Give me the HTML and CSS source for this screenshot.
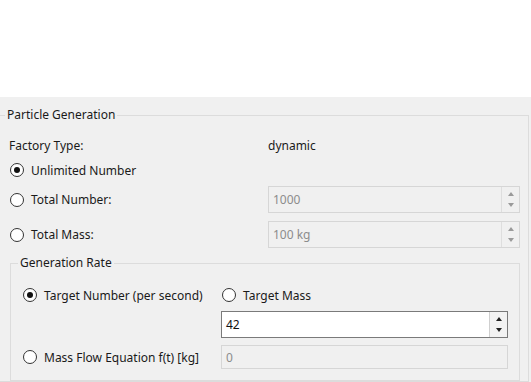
FILE: index.html
```html
<!DOCTYPE html>
<html lang="en">
<head>
    <meta charset="UTF-8">
    <meta name="viewport" content="width=device-width, initial-scale=1.0">
    <title>Particle Generation</title>
    <link rel="stylesheet" href="styles.css">
</head>
<body>
    <div class="top-space"></div>

    <div class="panel">
        <fieldset class="group group-outer">
            <legend>Particle Generation</legend>

            <div class="row row-factory">
                <span class="label">Factory Type:</span>
                <span class="value">dynamic</span>
            </div>

            <div class="row row-unlimited">
                <label class="radio"><span class="radio-dot checked"></span>Unlimited Number</label>
            </div>

            <div class="row row-total-number">
                <label class="radio"><span class="radio-dot"></span>Total Number:</label>
                <div class="spinbox disabled">
                    <span class="spin-value">1000</span>
                    <span class="spin-buttons">
                        <span class="spin-btn"><span class="arrow-up"></span></span>
                        <span class="spin-btn"><span class="arrow-down"></span></span>
                    </span>
                </div>
            </div>

            <div class="row row-total-mass">
                <label class="radio"><span class="radio-dot"></span>Total Mass:</label>
                <div class="spinbox disabled">
                    <span class="spin-value">100 kg</span>
                    <span class="spin-buttons">
                        <span class="spin-btn"><span class="arrow-up"></span></span>
                        <span class="spin-btn"><span class="arrow-down"></span></span>
                    </span>
                </div>
            </div>

            <fieldset class="group group-inner">
                <legend>Generation Rate</legend>

                <div class="row row-target">
                    <label class="radio"><span class="radio-dot checked"></span>Target Number (per second)</label>
                    <label class="radio"><span class="radio-dot"></span>Target Mass</label>
                </div>

                <div class="row row-rate">
                    <span></span>
                    <div class="spinbox active">
                        <span class="spin-value">42</span>
                        <span class="spin-buttons">
                            <span class="spin-btn"><span class="arrow-up"></span></span>
                            <span class="spin-btn"><span class="arrow-down"></span></span>
                        </span>
                    </div>
                </div>

                <div class="row row-flow">
                    <label class="radio"><span class="radio-dot"></span>Mass Flow Equation f(t) [kg]</label>
                    <div class="line-edit disabled">0</div>
                </div>
            </fieldset>
        </fieldset>
    </div>
</body>
</html>
```

FILE: styles.css
```css
* {
    margin: 0;
    padding: 0;
    box-sizing: border-box;
}

html, body {
    width: 531px;
    height: 382px;
    overflow: hidden;
}

body {
    font-family: 'Noto Sans', 'Open Sans', sans-serif;
    font-size: 12px;
    color: #1a1a1a;
    background-color: #ffffff;
}

.top-space {
    height: 97px;
    background-color: #ffffff;
}

.panel {
    height: 285px;
    background-color: #f0f0f0;
    padding: 10px 2px 0 0;
}

/* group boxes */
.group {
    border: 1px solid #dcdcdc;
}

.group legend {
    margin-left: -4px;
    padding: 0 2px;
    line-height: 16px;
}

.group-outer {
    margin-left: -1px;
    padding: 10px 8px 0 9px;
}

.group-inner {
    margin-left: 1px;
    margin-top: 7px;
    padding: 12px 11px 11px 11px;
}

/* rows */
.row {
    display: grid;
    grid-template-columns: 259px 1fr;
    align-items: center;
}

.group-inner .row {
    grid-template-columns: 199px 1fr;
}

.row-factory {
    height: 25px;
}

.row-unlimited {
    height: 24px;
}

.row-total-number {
    margin-top: 4px;
}

.row-total-mass {
    margin-top: 8px;
}

.row-target {
    height: 24px;
}

.row-rate {
    margin-top: 4px;
}

.row-flow {
    margin-top: 7px;
}

/* radio buttons */
.radio {
    display: flex;
    align-items: center;
    gap: 7px;
    white-space: nowrap;
}

.radio-dot {
    width: 14px;
    height: 14px;
    border: 1.5px solid #333333;
    border-radius: 50%;
    background-color: #ffffff;
    display: flex;
    align-items: center;
    justify-content: center;
    margin-left: 1px;
}

.radio-dot.checked::after {
    content: '';
    width: 6px;
    height: 6px;
    border-radius: 50%;
    background-color: #111111;
}

/* spin boxes and line edits */
.spinbox {
    display: flex;
    align-items: stretch;
    height: 27px;
    border: 1px solid #d6d6d6;
    background-color: #f0f0f0;
}

.spinbox.disabled {
    color: #8c8c8c;
}

.spinbox.active {
    background-color: #ffffff;
    border-color: #7a7a7a;
    color: #111111;
}

.spin-value {
    flex: 1;
    display: flex;
    align-items: center;
    padding-left: 4px;
}

.spin-buttons {
    width: 18px;
    display: flex;
    flex-direction: column;
    border-left: 1px solid #dedede;
    padding: 2px 1px;
}

.spinbox.active .spin-buttons {
    border-left-color: #cfcfcf;
    background-color: #f3f3f3;
}

.spin-btn {
    flex: 1;
    display: flex;
    align-items: center;
    justify-content: center;
}

.arrow-up {
    border-left: 3px solid transparent;
    border-right: 3px solid transparent;
    border-bottom: 4px solid #9a9a9a;
}

.arrow-down {
    border-left: 3px solid transparent;
    border-right: 3px solid transparent;
    border-top: 4px solid #9a9a9a;
}

.spinbox.active .arrow-up {
    border-bottom-color: #222222;
}

.spinbox.active .arrow-down {
    border-top-color: #222222;
}

.line-edit {
    height: 24px;
    border: 1px solid #d6d6d6;
    background-color: #f0f0f0;
    display: flex;
    align-items: center;
    padding-left: 4px;
}

.line-edit.disabled {
    color: #8c8c8c;
}
```
